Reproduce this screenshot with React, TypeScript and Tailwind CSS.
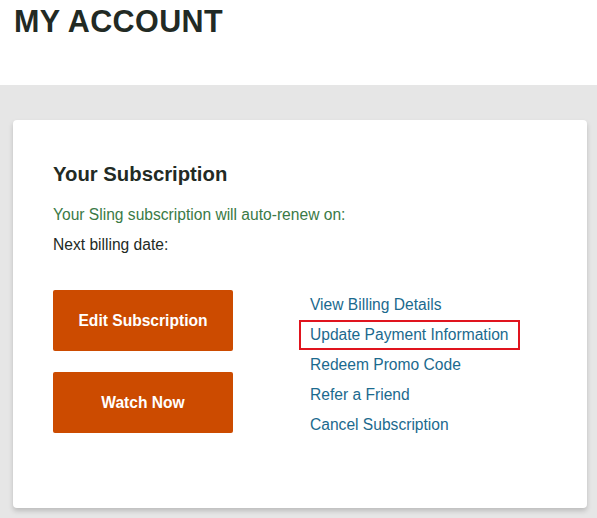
import React from "react"

const links = [
    "View Billing Details",
    "Update Payment Information",
    "Redeem Promo Code",
    "Refer a Friend",
    "Cancel Subscription",
]

const App: React.FC = () => {
    return (
        <div className="min-h-[518px] flex flex-col bg-white font-['Liberation_Sans',Arial,sans-serif]">
            <div className="h-[85px] px-[14px] pt-[3px]">
                <h1 className="text-[30.5px] leading-[36px] font-bold text-[#222a24] tracking-[0.4px]">MY ACCOUNT</h1>
            </div>

            <div className="flex-1 bg-[#e6e6e6] pt-[35px] pl-[13px] pr-[10px]">
                <div className="bg-white rounded-[4px] shadow-[0_3px_5px_rgba(0,0,0,0.18)] pt-[41px] pb-[68px] px-[40px]">
                    <h2 className="text-[20.3px] leading-[26px] font-bold text-[#222a24]">Your Subscription</h2>
                    <p className="mt-[19px] text-[15.6px] leading-[18px] text-[#3a7a46]">
                        Your Sling subscription will auto-renew on:
                    </p>
                    <p className="mt-[12px] text-[15.6px] leading-[18px] text-[#222a24]">Next billing date:</p>

                    <div className="mt-[36px] flex">
                        <div className="flex flex-col gap-[21px] w-[180px]">
                            <button className="h-[61px] rounded-[2px] bg-[#cc4b00] text-white text-[15.6px] font-bold">
                                Edit Subscription
                            </button>
                            <button className="h-[61px] rounded-[2px] bg-[#cc4b00] text-white text-[15.6px] font-bold">
                                Watch Now
                            </button>
                        </div>

                        <div className="ml-[66px] flex flex-col">
                            {links.map((l, i) => (
                                <a key={l} href="#"
                                    className={i === 1
                                        ? "h-[30px] flex items-center px-[9px] border-2 border-[#e0141e] text-[15.6px] text-[#1b6a8e]"
                                        : "h-[30px] flex items-center px-[11px] text-[15.6px] text-[#1b6a8e]"}>
                                    {l}
                                </a>
                            ))}
                        </div>
                    </div>
                </div>
            </div>
        </div>
    )
}

export default App
